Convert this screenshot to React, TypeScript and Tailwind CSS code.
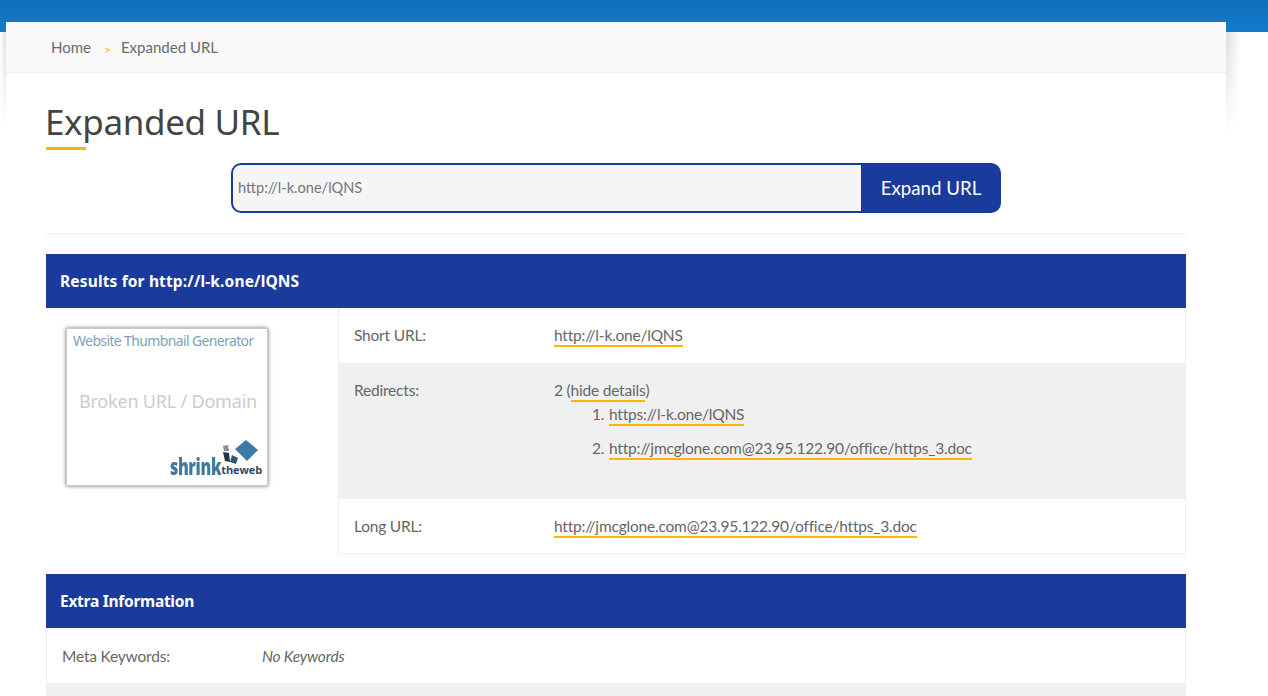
const BODY = "font-['Lato','Noto_Sans',sans-serif]";

const Link = ({children}: {children: React.ReactNode}) => (
    <a className="border-b-2 border-[#ffb400] leading-[20px] inline-block">{children}</a>
);

const ThumbLogo = () => (
    <>
        <div className="absolute right-[5px] bottom-[7px] flex items-end font-['Open_Sans',sans-serif]">
            <span className="inline-block origin-right scale-x-[0.7] -ml-[22px] font-extrabold text-[23px] leading-[24px] tracking-[-0.5px] text-[#3f7a9e]">shrink</span>
            <span className="font-bold text-[11px] leading-[17px] text-[#2e4a5e] tracking-[-0.1px]">theweb</span>
        </div>
        <svg className="absolute right-[5px] bottom-[17px]" width="42" height="30" viewBox="220 438 42 30">
            <path d="M246 440 L258 450 L247 461 L235 449 Z" fill="#3c7ba8" />
            <path d="M232 455 L238 458 L236 464 L230 462 Z" fill="#2c5878" />
            <path d="M223 452 L229 453 L230 462 L225 461 Z" fill="#26323c" />
            <path d="M223 446 L228 445 L229 451 L224 451 Z" fill="#8a8f94" />
        </svg>
    </>
);

const Thumbnail = () => (
    <div className="relative w-[202px] h-[158px] bg-white border border-[#c8c8c8] shadow-[0_0_4px_rgba(0,0,0,0.55)] font-['Noto_Sans',sans-serif]">
        <div className="pl-[6px] pt-[3px] text-[14px] leading-[18px] tracking-[-0.63px] text-[#7f9fb5] whitespace-nowrap">Website Thumbnail Generator</div>
        <div className="mt-[39px] pl-[12px] text-[18px] leading-[24px] tracking-[-0.2px] text-[#cccccc] whitespace-nowrap">Broken URL / Domain</div>
        <ThumbLogo />
    </div>
);

const SectionHeader = ({children, tracking}: {children: React.ReactNode; tracking: string}) => (
    <div className={`h-[54px] bg-[#1a3b9c] flex items-center pl-[14px] pt-[2px] text-white font-['Noto_Sans',sans-serif] font-bold text-[15.5px] ${tracking}`}>
        {children}
    </div>
);

export default function App() {
    return (
        <div className={`relative h-screen overflow-hidden bg-white text-[15.5px] tracking-[-0.2px] text-[#666666] ${BODY}`}>
            {/* top bar */}
            <div className="h-[32px] bg-gradient-to-b from-[#1070ba] to-[#127bca]" />

            <div className="relative -mt-[10px] ml-[6px] w-[1220px]">
                {/* soft shadow at both sides of the card head */}
                <div className="absolute -left-[6px] top-[10px] w-[6px] h-[100px] bg-gradient-to-l from-[#dcdcdc] to-transparent [mask-image:linear-gradient(to_bottom,black,transparent)]" />
                <div className="absolute -right-[15px] top-[10px] w-[15px] h-[100px] bg-gradient-to-r from-[#dcdcdc] to-transparent [mask-image:linear-gradient(to_bottom,black,transparent)]" />

                {/* breadcrumb */}
                <div className="h-[51px] bg-[#f9f9f9] border-b border-[#eeeeee] flex items-center pl-[45px] text-[15px] tracking-normal text-[#6b6b6b]">
                    <span>Home</span>
                    <span className="ml-[13px] mr-[10px] mt-[5px] text-[12px] leading-none text-[#ffb400]">&gt;</span>
                    <span>Expanded URL</span>
                </div>

                <div className="px-[40px]">
                    <h1 className="mt-[27px] -ml-[1px] font-['Noto_Sans',sans-serif] text-[35px] leading-[44px] text-[#444444] tracking-[-0.35px]">Expanded URL</h1>
                    <div className="w-[40px] h-[3px] bg-[#ffb400] mt-[3px]" />

                    {/* expand form */}
                    <div className="mt-[13px] ml-[185px] w-[770px] h-[50px] flex">
                        <div className="flex-1 h-full bg-[#f5f5f5] border-2 border-r-0 border-[#1a3b9c] rounded-l-[10px] flex items-center pl-[5px] text-[14.6px] tracking-normal text-[#777777]">
                            http://l-k.one/lQNS
                        </div>
                        <button className="w-[140px] h-full bg-[#1a3b9c] rounded-r-[10px] text-white text-[18.7px] tracking-normal">Expand URL</button>
                    </div>

                    <div className="mt-[20px] border-t border-[#eeeeee]" />

                    <div className="mt-[20px]">
                        <SectionHeader tracking="tracking-[0.15px]">Results for http://l-k.one/lQNS</SectionHeader>
                        <div className="flex">
                            <div className="w-[292px] pt-[20px] pl-[20px]">
                                <Thumbnail />
                            </div>
                            <div className="flex-1 border border-t-0 border-[#eeeeee]">
                                <div className="h-[55px] flex items-center pl-[15px] pt-[1px]">
                                    <div className="w-[200px]">Short URL:</div>
                                    <Link>http://l-k.one/lQNS</Link>
                                </div>
                                <div className="h-[136px] bg-[#f0f0f0] flex pl-[15px] pt-[17px]">
                                    <div className="w-[200px] leading-[20px]">Redirects:</div>
                                    <div className="leading-[20px]">
                                        <div>2 (<Link>hide details</Link>)</div>
                                        <ol className="mt-[2px] pl-[54px] list-decimal list-outside">
                                            <li className="mb-[12px] pl-[1px]"><Link>https://l-k.one/lQNS</Link></li>
                                            <li className="pl-[1px]"><Link>http://jmcglone.com@23.95.122.90/office/https_3.doc</Link></li>
                                        </ol>
                                    </div>
                                </div>
                                <div className="h-[54px] flex items-center pl-[15px] pt-[1px]">
                                    <div className="w-[200px]">Long URL:</div>
                                    <Link>http://jmcglone.com@23.95.122.90/office/https_3.doc</Link>
                                </div>
                            </div>
                        </div>
                    </div>

                    <div className="mt-[20px]">
                        <SectionHeader tracking="tracking-[-0.27px]">Extra Information</SectionHeader>
                        <div className="border-x border-[#eeeeee]">
                            <div className="h-[55px] flex items-center pl-[15px] pt-[2px]">
                                <div className="w-[200px]">Meta Keywords:</div>
                                <em>No Keywords</em>
                            </div>
                            <div className="h-[55px] bg-[#f0f0f0]" />
                        </div>
                    </div>
                </div>
            </div>
        </div>
    );
}
